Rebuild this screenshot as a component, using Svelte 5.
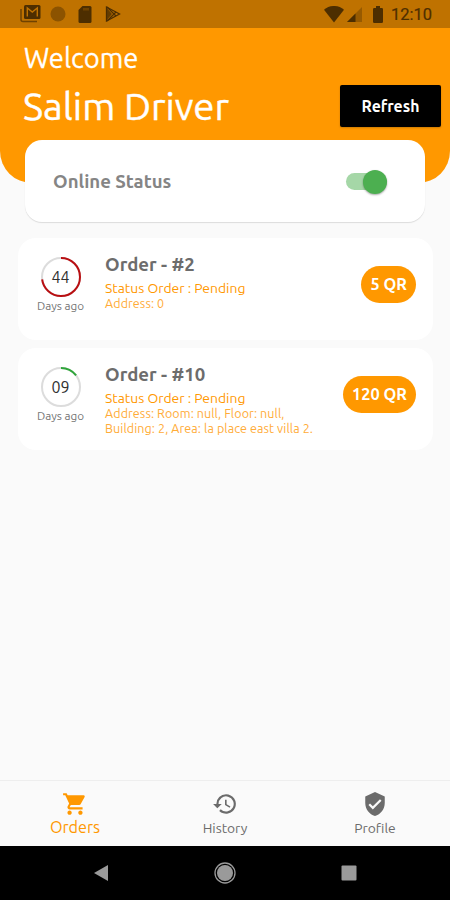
<script>
  let online = $state(true);
  let activeTab = $state("Orders");

  const orders = [
    {
      id: 2,
      days: "44",
      progress: 0.725,
      color: "#b90f12",
      status: "Pending",
      address: ["Address: 0"],
      price: 5
    },
    {
      id: 10,
      days: "09",
      progress: 0.145,
      color: "#2fa53a",
      status: "Pending",
      address: ["Address: Room: null, Floor: null,", "Building: 2, Area: la place east villa 2."],
      price: 120
    }
  ];

  const tabs = [
    {
      name: "Orders",
      icon: "M7 18c-1.100 0-1.990.9-1.990 2S5.900 22 7 22s2-.9 2-2-.9-2-2-2zM1 2v2h2l3.600 7.590-1.350 2.450c-.16.28-.25.61-.25.96 0 1.100.9 2 2 2h12v-2H7.420c-.14 0-.25-.11-.25-.25l.03-.12.900-1.630h7.450c.75 0 1.410-.41 1.750-1.030l3.580-6.490A1 1 0 0 0 20 4H5.210l-.94-2H1zm16 16c-1.100 0-1.990.9-1.990 2s.89 2 1.990 2 2-.9 2-2-.9-2-2-2z"
    },
    {
      name: "History",
      icon: "M13 3a9 9 0 0 0-9 9H1l3.890 3.890.07.14L9 12H6a7 7 0 1 1 2.060 4.940l-1.420 1.420A9 9 0 1 0 13 3zm-1 5v5l4.280 2.540.72-1.210-3.500-2.080V8H12z"
    },
    {
      name: "Profile",
      icon: "M12 1L3 5v6c0 5.550 3.840 10.740 9 12 5.160-1.260 9-6.450 9-12V5l-9-4zm-2 16l-4-4 1.410-1.410L10 14.170l6.590-6.590L18 9l-8 8z"
    }
  ];

  const ringLength = 2 * Math.PI * 19;
</script>

<div class="screen">
  <header class="header">
    <div class="status-bar">
      <div class="notifications">
        <svg width="21" height="18" viewBox="0 0 21 18">
          <path d="M1 4v10.500a2 2 0 0 0 2 2h14" fill="none" stroke="currentColor" stroke-width="1.500" opacity=".7" />
          <rect x="4" y="0" width="16.500" height="14" rx="1.500" />
          <path class="envelope" d="M7.300 11.500V3l5 4 5-4v8.500" />
        </svg>
        <svg width="16" height="16" viewBox="0 0 16 16">
          <circle cx="8" cy="8" r="7.500" opacity=".45" />
        </svg>
        <svg class="sd" width="14" height="17" viewBox="0 0 14 17">
          <path d="M4.500 0H12a1.500 1.500 0 0 1 1.500 1.500v14A1.500 1.500 0 0 1 12 17H2A1.500 1.500 0 0 1 .5 15.500V4z" />
          <path d="M5 2h6v2.500H5z" fill="#bf7200" opacity=".3" />
        </svg>
        <svg class="play" width="16" height="16" viewBox="0 0 16 16">
          <path d="M1.500 1l13 7-13 7z" fill="none" stroke="currentColor" stroke-width="1.300" />
          <path d="M1 1l6 7-6 7z" opacity=".8" />
          <path d="M2 1l9 9M2 15l9-9" stroke="currentColor" stroke-width="1.300" />
        </svg>
      </div>
      <div class="indicators">
        <svg width="20" height="17" viewBox="0 0 20 17">
          <path d="M0 3.800a15 15 0 0 1 20 0L10 16.500z" />
        </svg>
        <svg class="signal" width="15" height="15" viewBox="0 0 15 15">
          <path d="M15 0v15H0z" opacity=".35" />
          <path d="M8.500 6.500V15H0z" />
        </svg>
        <svg class="battery" width="10" height="17" viewBox="0 0 10 17">
          <path d="M3 0h4v2h1.500A1.300 1.300 0 0 1 10 3.300v12.400A1.300 1.300 0 0 1 8.700 17H1.300A1.300 1.300 0 0 1 0 15.700V3.300A1.300 1.300 0 0 1 1.300 2H3z" />
        </svg>
        <span class="clock">12:10</span>
      </div>
    </div>

    <p class="welcome">Welcome</p>
    <div class="name-row">
      <h1>Salim Driver</h1>
      <button class="refresh">Refresh</button>
    </div>
  </header>

  <section class="online-card">
    <span class="online-label">Online Status</span>
    <button class="switch" class:on={online} aria-label="Online Status" onclick={() => (online = !online)}>
      <span class="thumb"></span>
    </button>
  </section>

  <main class="orders">
    {#each orders as order}
      <article class="order">
        <div class="age">
          <div class="ring">
            <svg width="42" height="42" viewBox="0 0 42 42">
              <circle class="track" cx="21" cy="21" r="19" />
              <circle
                cx="21"
                cy="21"
                r="19"
                stroke={order.color}
                stroke-dasharray="{ringLength * order.progress} {ringLength}"
                transform="rotate(-90 21 21)"
              />
            </svg>
            <span>{order.days}</span>
          </div>
          <span class="days-label">Days ago</span>
        </div>
        <div class="info">
          <h2>Order - #{order.id}</h2>
          <p class="order-status">Status Order : {order.status}</p>
          {#each order.address as line}
            <p class="address">{line}</p>
          {/each}
        </div>
        <span class="price">{order.price} QR</span>
      </article>
    {/each}
  </main>

  <nav class="tabs">
    {#each tabs as tab}
      <button class="tab" class:active={activeTab === tab.name} onclick={() => (activeTab = tab.name)}>
        <svg width="26" height="26" viewBox="0 0 24 24"><path d={tab.icon} /></svg>
        <span>{tab.name}</span>
      </button>
    {/each}
  </nav>

  <footer class="system-nav">
    <svg width="16" height="18" viewBox="0 0 16 18"><path d="M15 1v16L1 9z" /></svg>
    <svg width="24" height="24" viewBox="0 0 24 24">
      <circle cx="12" cy="12" r="10" fill="none" stroke="currentColor" stroke-width="1.300" />
      <circle cx="12" cy="12" r="8" />
    </svg>
    <svg width="16" height="16" viewBox="0 0 16 16"><rect x=".5" y=".5" width="15" height="15" rx="1" /></svg>
  </footer>
</div>

<style>
  :global(body) {
    margin: 0;
    background: #fafafa;
  }

  .screen {
    display: flex;
    flex-direction: column;
    width: 450px;
    height: 900px;
    overflow: hidden;
    background: #fafafa;
    color: #757575;
    font-family: Ubuntu, "Noto Sans", sans-serif;
  }

  h1,
  h2,
  p {
    margin: 0;
    white-space: nowrap;
  }

  svg {
    display: block;
    flex: none;
    fill: currentColor;
  }

  button {
    border: 0;
    padding: 0;
    font-family: inherit;
    cursor: pointer;
  }

  .header {
    flex: none;
    height: 183px;
    background: #ff9800;
    border-radius: 0 0 32px 32px;
    color: white;
  }

  .status-bar {
    display: flex;
    justify-content: space-between;
    height: 28px;
    padding: 0 18px 0 20px;
    background: #bf7200;
    color: #4d2e00;
  }

  .notifications,
  .indicators {
    display: flex;
    align-items: center;
  }

  .notifications {
    gap: 9px;
  }

  .envelope {
    fill: none;
    stroke: #bf7200;
    stroke-width: 1.4;
  }

  .sd {
    margin-left: 3px;
  }

  .play {
    margin-left: 4px;
  }

  .signal {
    margin-left: 3px;
  }

  .battery {
    margin: 0 8px 0 11px;
  }

  .clock {
    font: 400 16.500px/28px Roboto, sans-serif;
    padding-top: 2px;
    -webkit-text-stroke: 0.2px currentColor;
  }

  .welcome {
    padding: 12px 24px 0;
    font-size: 27.300px;
    line-height: 36px;
    -webkit-text-stroke: 0.3px currentColor;
  }

  .name-row {
    display: flex;
    align-items: center;
    justify-content: space-between;
    height: 50px;
    padding: 4px 9px 0 23px;
    box-sizing: border-box;
  }

  h1 {
    padding-top: 6px;
    font-size: 38.300px;
    font-weight: 400;
    line-height: 50px;
    -webkit-text-stroke: 0.4px currentColor;
  }

  .refresh {
    width: 101px;
    height: 42px;
    margin-top: 6px;
    border-radius: 2px;
    background: black;
    color: white;
    font-size: 15.800px;
    font-weight: 600;
    box-shadow: 0 1px 2px rgba(0, 0, 0, 0.2);
  }

  .online-card {
    display: flex;
    flex: none;
    align-items: center;
    justify-content: space-between;
    height: 82px;
    margin: -43px 25px 0;
    padding: 1px 38px 0 28px;
    box-sizing: border-box;
    border-radius: 17px;
    background: white;
    box-shadow: 0 1px 1px rgba(0, 0, 0, 0.12);
  }

  .online-label {
    color: #858585;
    font-size: 18.600px;
    font-weight: 600;
  }

  .switch {
    display: flex;
    align-items: center;
    width: 41px;
    height: 17px;
    border-radius: 9px;
    background: #bdbdbd;
  }

  .switch.on {
    justify-content: flex-end;
    background: #a5d7a7;
  }

  .thumb {
    width: 24px;
    height: 24px;
    border-radius: 50%;
    background: #f5f5f5;
    box-shadow: 0 1px 2px rgba(0, 0, 0, 0.35);
  }

  .on .thumb {
    background: #4caf50;
  }

  .orders {
    display: flex;
    flex: 1;
    flex-direction: column;
    gap: 8px;
    padding: 16px 17px 0 18px;
  }

  .order {
    display: flex;
    align-items: flex-start;
    height: 102px;
    border-radius: 18px;
    background: white;
  }

  .age {
    display: flex;
    flex-direction: column;
    align-items: center;
    width: 85px;
    padding-top: 18px;
  }

  .ring {
    display: grid;
    place-items: center;
    color: #303030;
    font-size: 16px;
    line-height: 42px;
  }

  .ring > * {
    grid-area: 1 / 1;
  }

  .ring circle {
    fill: none;
    stroke-width: 2;
  }

  .ring .track {
    stroke: #dcdcdc;
  }

  .days-label {
    font-size: 11.700px;
    line-height: 16px;
  }

  .info {
    flex: 1;
    padding: 15px 0 0 2px;
    color: #ff9800;
  }

  h2 {
    margin-bottom: 4px;
    color: #6c6c6c;
    font-size: 18.600px;
    font-weight: 600;
    line-height: 24px;
  }

  .order-status {
    font-size: 13.900px;
    line-height: 15px;
  }

  .address {
    color: #ffac38;
    font-size: 12.500px;
    letter-spacing: 0.1px;
    line-height: 15px;
  }

  .price {
    margin: 28px 17px 0 0;
    padding: 0 9px;
    border-radius: 19px;
    background: #ff9800;
    color: white;
    font-size: 16.300px;
    font-weight: 700;
    line-height: 37px;
  }

  .tabs {
    display: grid;
    grid-template-columns: repeat(3, 1fr);
    height: 66px;
    box-sizing: border-box;
    border-top: 1px solid #eeeeee;
  }

  .tab {
    display: flex;
    flex-direction: column;
    align-items: center;
    padding-top: 10px;
    background: none;
    color: #6b6b6b;
    font-size: 13.800px;
    line-height: 22px;
  }

  .tab.active {
    color: #ff9800;
    font-size: 16.200px;
    line-height: 21px;
  }

  .system-nav {
    display: flex;
    flex: none;
    align-items: center;
    justify-content: space-between;
    height: 54px;
    padding: 0 93px;
    box-sizing: border-box;
    background: black;
    color: #9a9a9a;
  }
</style>
